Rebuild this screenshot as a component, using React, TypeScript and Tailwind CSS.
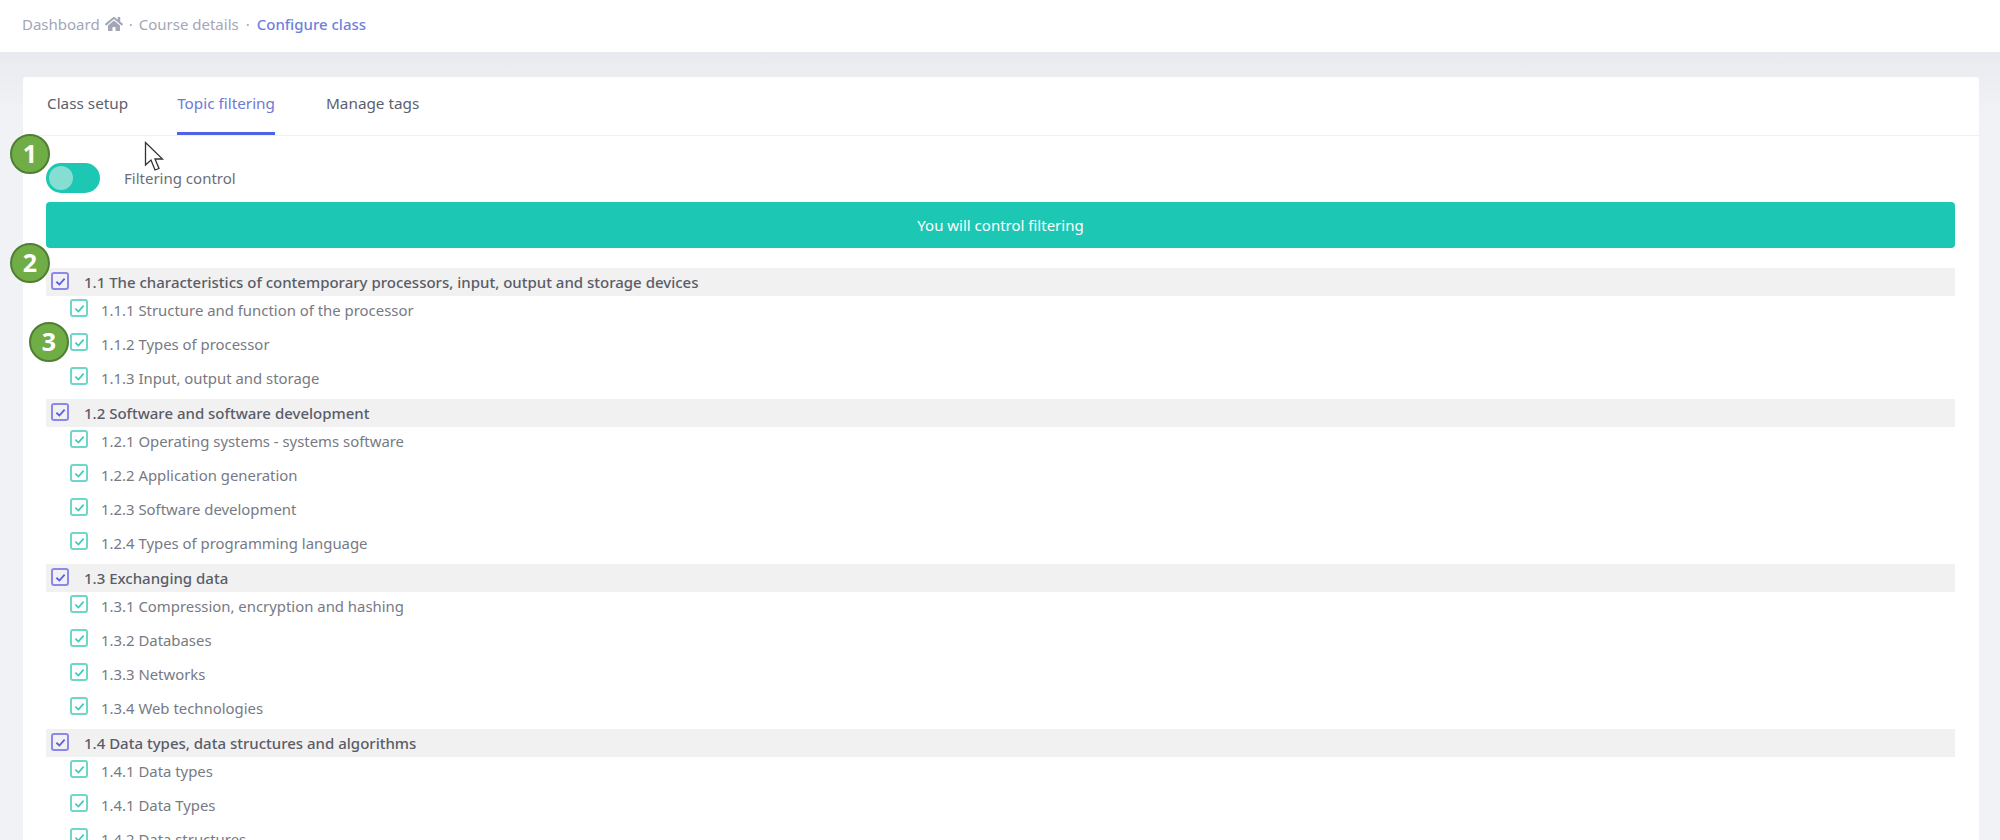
import { FaHome } from 'react-icons/fa'

const sections = [
    {
        title: '1.1 The characteristics of contemporary processors, input, output and storage devices',
        items: ['1.1.1 Structure and function of the processor', '1.1.2 Types of processor', '1.1.3 Input, output and storage'],
    },
    {
        title: '1.2 Software and software development',
        items: [
            '1.2.1 Operating systems - systems software',
            '1.2.2 Application generation',
            '1.2.3 Software development',
            '1.2.4 Types of programming language',
        ],
    },
    {
        title: '1.3 Exchanging data',
        items: ['1.3.1 Compression, encryption and hashing', '1.3.2 Databases', '1.3.3 Networks', '1.3.4 Web technologies'],
    },
    {
        title: '1.4 Data types, data structures and algorithms',
        items: ['1.4.1 Data types', '1.4.1 Data Types', '1.4.2 Data structures'],
    },
]

const CheckIcon = ({ className, weight }: { className: string; weight: number }) => (
    <svg viewBox="0 0 12 12" className={className} fill="none" stroke="currentColor" strokeWidth={weight}>
        <path d="M2.2 6.2 L5 8.8 L9.8 3.4" />
    </svg>
)

const Badge = ({ label, className }: { label: string; className: string }) => (
    <div
        className={`absolute flex h-10 w-10 items-center justify-center rounded-full border-2 border-[#507e32] bg-[#70ad47] font-['Open_Sans',sans-serif] text-[25px] font-bold text-white ${className}`}
    >
        {label}
    </div>
)

const App = () => {
    return (
        <div className="relative h-[840px] overflow-hidden bg-[#f0f2f5] font-['Noto_Sans',sans-serif]">
            <header className="flex h-[52px] items-center bg-white pb-[4px] pl-[22px] text-[15px] text-[#a3a6b7]">
                <span>Dashboard</span>
                <FaHome className="ml-[5px] text-[18px]" />
                <span className="mx-[6px]">·</span>
                <span>Course details</span>
                <span className="mx-[7px]">·</span>
                <span className="font-medium text-[#6f7fe0]">Configure class</span>
            </header>

            <main className="h-[788px] bg-gradient-to-b from-[#e9eaef] to-[#f0f2f5] to-[60px] pl-[23px] pr-[21px] pt-[25px]">
                <div className="h-full rounded-t-[3px] bg-white">
                    <nav className="flex h-[59px] gap-[49px] border-b border-[#eeeff2] pl-[24px] text-[15.3px] text-[#5c5f6b]">
                        <button className="flex items-center pb-[6px]">Class setup</button>
                        <button className="flex items-center border-b-[3px] border-[#4f63ea] pb-[3px] text-[#6f78d8]">
                            Topic filtering
                        </button>
                        <button className="ml-[2px] flex items-center pb-[6px]">Manage tags</button>
                    </nav>

                    <div className="pl-[23px] pr-[24px] pt-[27px]">
                        <div className="flex h-[30px] items-center">
                            <div className="flex h-[30px] w-[54px] items-center rounded-full bg-[#1cc8b4] pl-[3px]">
                                <div className="h-[24px] w-[24px] rounded-full bg-[#86ddd2]" />
                            </div>
                            <span className="ml-[24px] text-[15px] text-[#6b6e78]">Filtering control</span>
                        </div>

                        <div className="mt-[9px] flex h-[46px] items-center justify-center rounded-[4px] bg-[#1cc8b4] text-[15px] text-white">
                            You will control filtering
                        </div>

                        <div className="mt-[20px]">
                            {sections.map((section) => (
                                <section key={section.title} className="mb-[4px]">
                                    <div className="flex h-[28px] items-center bg-[#f1f1f1] pl-[5px]">
                                        <div className="mb-[2px] flex h-[18px] w-[18px] items-center justify-center rounded-[3px] border-2 border-[#8b88ea] text-[#5f5fe0]">
                                            <CheckIcon className="h-[13px] w-[13px]" weight={1.7} />
                                        </div>
                                        <span className="ml-[15px] text-[15px] font-medium text-[#5a5c68]">{section.title}</span>
                                    </div>
                                    <div className="-mt-[3px]">
                                        {section.items.map((item) => (
                                            <div key={item} className="flex h-[34px] items-center pl-[24px]">
                                                <div className="mb-[4px] flex h-[18px] w-[18px] items-center justify-center rounded-[3px] border-2 border-[#6fd6c8] text-[#3fcab8]">
                                                    <CheckIcon className="h-[13px] w-[13px]" weight={1.6} />
                                                </div>
                                                <span className="ml-[13px] text-[14.9px] text-[#777a84]">{item}</span>
                                            </div>
                                        ))}
                                    </div>
                                </section>
                            ))}
                        </div>
                    </div>
                </div>
            </main>

            <Badge label="1" className="left-[10px] top-[134px]" />
            <Badge label="2" className="left-[10px] top-[243px]" />
            <Badge label="3" className="left-[29px] top-[322px]" />

            <svg className="absolute left-[144px] top-[141px] h-[32px] w-[22px]" viewBox="0 0 22 32">
                <path d="M1.5 1.5 V24 L7 19 L11 29 L15 27.5 L11 18 L18.5 18 Z" fill="#fff" stroke="#333" strokeWidth="1.3" />
            </svg>
        </div>
    )
}

export default App
